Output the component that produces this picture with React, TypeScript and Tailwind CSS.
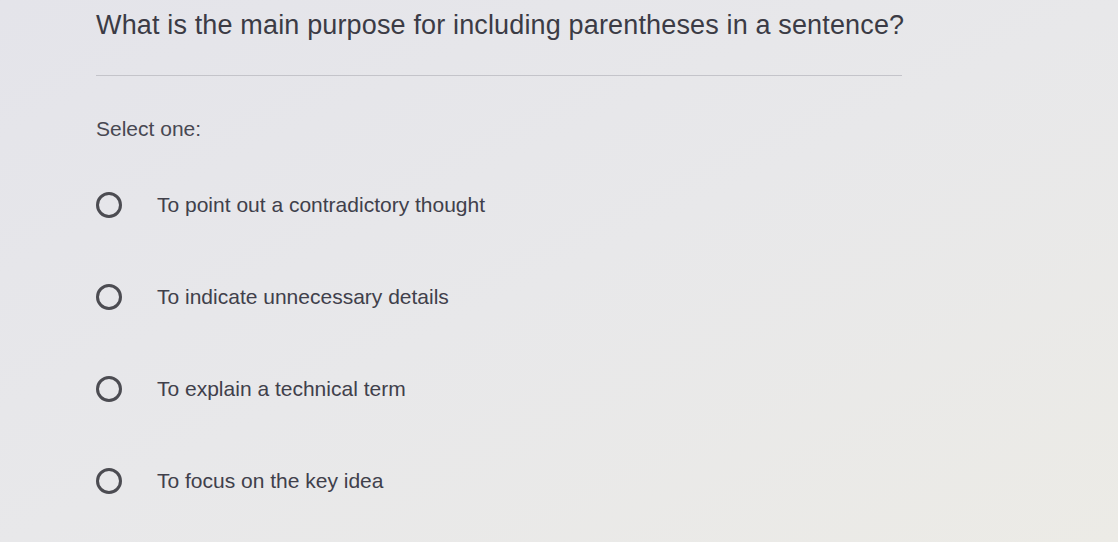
import { FC } from 'react';

const options = [
  'To point out a contradictory thought',
  'To indicate unnecessary details',
  'To explain a technical term',
  'To focus on the key idea',
];

const Radio: FC = () => (
  <span className="block w-[26px] h-[26px] rounded-full border-[3px] border-[#4c4c52] shrink-0" />
);

const App: FC = () => {
  return (
    <div
      className="w-[1118px] h-[542px] overflow-hidden bg-gradient-to-br from-[#e4e4ea] via-[#e8e8ea] to-[#ecebe6] text-[#45454f]"
      style={{ fontFamily: '"Liberation Sans", Arial, sans-serif' }}
    >
      <div className="pl-[96px] pr-[216px] pt-[9px]">
        {/* Question */}
        <h1 className="text-[27px] leading-[32px] text-[#3b3b45] tracking-[0.15px] whitespace-nowrap">
          What is the main purpose for including parentheses in a sentence?
        </h1>
        <div className="mt-[34px] h-px bg-[#c4c4ca]" />

        <p className="mt-[41px] text-[21px] leading-[24px] text-[#484852]">Select one:</p>

        {/* Answers */}
        <div className="mt-[51px] flex flex-col gap-[66px]">
          {options.map(o => (
            <label key={o} className="flex items-center h-[26px]">
              <Radio />
              <span className="ml-[35px] text-[21px] leading-[26px] text-[#40404b] whitespace-nowrap">{o}</span>
            </label>
          ))}
        </div>
      </div>
    </div>
  );
};

export default App;
